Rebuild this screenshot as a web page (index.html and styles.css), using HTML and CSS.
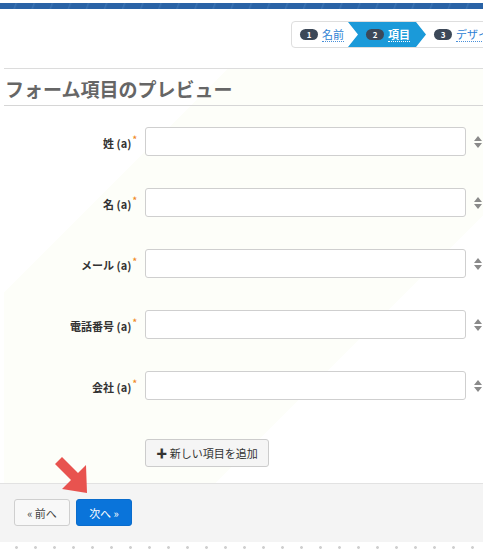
FILE: index.html
```html
<!DOCTYPE html>
<html>
	<head>
		<title>フォーム項目</title>
		<link rel="stylesheet" href="styles.css">
	</head>
	<body>
		<div class="band"></div>
		<div class="steps-wrap">
			<div class="steps">
				<div class="step"><span class="num">1</span><span class="name">名前</span></div>
				<div class="step active"><span class="num">2</span><span class="name">項目</span></div>
				<div class="step"><span class="num">3</span><span class="name">デザイン</span></div>
			</div>
		</div>
		<div class="page">
			<h1>フォーム項目のプレビュー</h1>
			<form class="fields">
				<div class="row">
					<label>姓 (a)<sup>*</sup></label>
					<input type="text">
					<svg class="sort" width="8" height="12" viewBox="0 0 8 12"><path d="M4 0 L8 5 H0 Z M0 7 H8 L4 12 Z" fill="#8a8a8a"/></svg>
				</div>
				<div class="row">
					<label>名 (a)<sup>*</sup></label>
					<input type="text">
					<svg class="sort" width="8" height="12" viewBox="0 0 8 12"><path d="M4 0 L8 5 H0 Z M0 7 H8 L4 12 Z" fill="#8a8a8a"/></svg>
				</div>
				<div class="row">
					<label>メール (a)<sup>*</sup></label>
					<input type="text">
					<svg class="sort" width="8" height="12" viewBox="0 0 8 12"><path d="M4 0 L8 5 H0 Z M0 7 H8 L4 12 Z" fill="#8a8a8a"/></svg>
				</div>
				<div class="row">
					<label>電話番号 (a)<sup>*</sup></label>
					<input type="text">
					<svg class="sort" width="8" height="12" viewBox="0 0 8 12"><path d="M4 0 L8 5 H0 Z M0 7 H8 L4 12 Z" fill="#8a8a8a"/></svg>
				</div>
				<div class="row">
					<label>会社 (a)<sup>*</sup></label>
					<input type="text">
					<svg class="sort" width="8" height="12" viewBox="0 0 8 12"><path d="M4 0 L8 5 H0 Z M0 7 H8 L4 12 Z" fill="#8a8a8a"/></svg>
				</div>
				<div class="add-row">
					<button type="button" class="add"><b>✚</b> 新しい項目を追加</button>
				</div>
			</form>
		</div>
		<div class="footer">
			<button type="button" class="prev">« 前へ</button>
			<button type="button" class="next">次へ »</button>
			<!-- red pointer drawn over the footer edge -->
			<svg class="pointer" width="40" height="44" viewBox="50 454 40 44">
				<path d="M55 465 L62 458 L78 474 L86 466 L87 494 L62 490 L71 481 Z" fill="#e8534f"/>
			</svg>
		</div>
		<div class="dots"></div>
	</body>
</html>
```
FILE: styles.css
```css
body{
	margin:0;
	font-family:"Noto Sans CJK JP","Liberation Sans",sans-serif;
	color:#333;
	background:#fff;
	width:483px;
	overflow:hidden;
}
.band{
	margin-top:3px;
	height:6px;
	background:repeating-linear-gradient(110deg,#2a63a6 0,#2a63a6 14px,#3a72b2 15px,#2a63a6 17px);
}
.steps-wrap{
	margin-left:4px;
	padding:12px 0 0 287px;
	height:47px;
	border-bottom:1px solid #dcdcdc;
	overflow:hidden;
}
.steps{
	display:flex;
	height:25px;
	width:220px;
	border:1px solid #dedede;
	border-radius:4px;
	background:#fff;
	overflow:hidden;
}
.step{
	display:flex;
	align-items:center;
	padding:0 6px 0 8px;
	font-size:11px;
	height:25px;
	white-space:nowrap;
}
.step.active{
	background:#1b9ad9;
	margin-left:-2px;
	padding:0 16px 0 18px;
	clip-path:polygon(0 0,calc(100% - 10px) 0,100% 50%,calc(100% - 10px) 100%,0 100%,10px 50%);
}
.num{
	display:inline-block;
	width:18px;
	height:11px;
	line-height:11px;
	border-radius:6px;
	background:#3c4858;
	color:#fff;
	font-size:8px;
	font-weight:bold;
	text-align:center;
	margin-right:4px;
}
.name{
	color:#2e7fd4;
	border-bottom:1px dotted #4a90d9;
	line-height:13px;
}
.active .name{
	color:#fff;
	font-weight:bold;
	border-bottom-color:#fff;
}
.page{
	margin-left:4px;
	background:linear-gradient(135deg,#fff 0,#fff 25%,#fdfef9 25%,#fdfef9 70%,#fff 70%);
}
h1{
	margin:0;
	padding:8px 0 4px 1px;
	font-size:19px;
	line-height:24px;
	color:#666;
	border-bottom:1px solid #d6d6d6;
}
.fields{
	padding:21px 0 0 0;
}
.row{
	display:grid;
	grid-template-columns:133px 321px 15px;
	column-gap:8px;
	align-items:center;
	margin-bottom:32px;
}
.row label{
	text-align:right;
	font-size:11px;
	font-weight:bold;
	color:#333;
}
.row sup{
	color:#f08a24;
	font-size:9px;
	margin-left:1px;
}
.row input{
	box-sizing:border-box;
	height:29px;
	border:1px solid #cfcfcf;
	border-radius:3px;
	background:#fff;
	margin:0;
}
.add-row{
	padding:7px 0 16px 141px;
}
button{
	font-family:"Noto Sans CJK JP","Liberation Sans",sans-serif;
	font-size:11px;
	border-radius:3px;
	cursor:pointer;
}
.add{
	height:28px;
	width:124px;
	background:#f5f5f5;
	border:1px solid #cccccc;
	color:#333;
	padding:0;
}
.footer{
	position:relative;
	background:#f4f4f4;
	border-top:1px solid #e2e2e2;
	height:59px;
	padding:15px 0 0 14px;
	box-sizing:border-box;
	display:flex;
	align-items:flex-start;
	gap:6px;
}
.prev{
	width:56px;
	height:27px;
	background:#f8f8f8;
	border:1px solid #cfcfcf;
	color:#444;
}
.next{
	width:56px;
	height:27px;
	background:#0a74da;
	border:1px solid #0a6ccc;
	color:#fff;
}
.pointer{
	position:absolute;
	left:50px;
	top:-31px;
}
.dots{
	height:11px;
	background:radial-gradient(circle,#d0d0d0 1.2px,transparent 1.6px) 7px 0/19px 11px repeat-x;
}
```
